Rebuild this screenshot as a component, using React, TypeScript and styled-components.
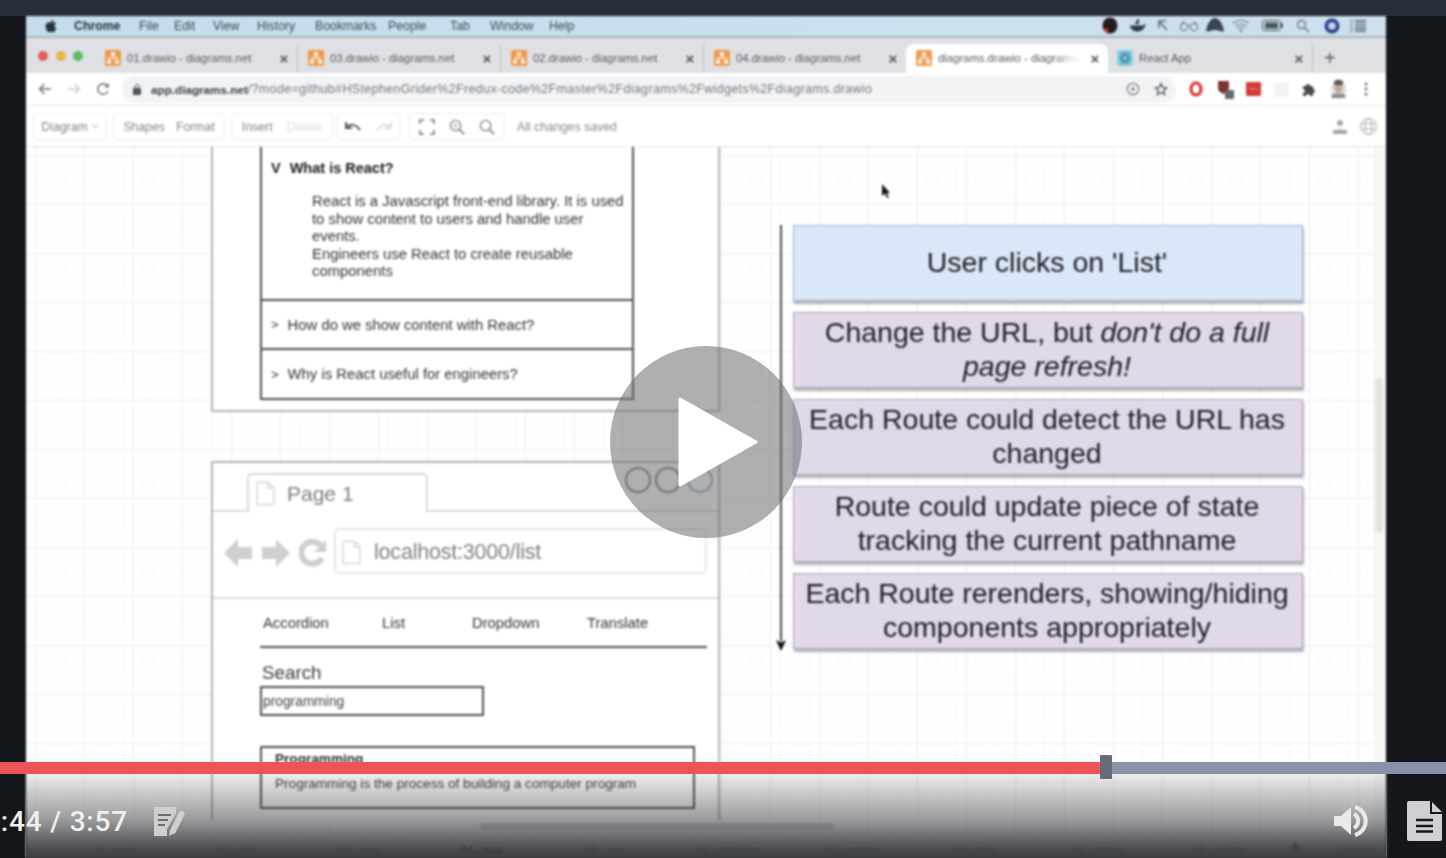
import React from "react";
import styled, { createGlobalStyle } from "styled-components";

const Global = createGlobalStyle`
  html, body { margin: 0; padding: 0; background: #14171c; overflow: hidden; }
  body { font-family: "Liberation Sans", Arial, sans-serif; }
  * { box-sizing: border-box; }
`;

const Page = styled.div`
  position: relative;
  width: 1446px;
  height: 858px;
  overflow: hidden;
  display: flex;
  flex-direction: column;
  background: #14171c;
`;
const TopStrip = styled.div`
  height: 16px;
  flex: none;
  background: #272d3a;
`;
const Stage = styled.div`
  flex: 1;
  min-height: 0;
  display: flex;
  padding: 0 60px 0 26px;
`;
const Recording = styled.div`
  width: 1360px;
  height: 842px;
  display: flex;
  flex-direction: column;
  overflow: hidden;
  background: #fff;
  filter: blur(0.85px);
`;

/* macOS menu bar */
const MenuBar = styled.div`
  height: 22px;
  flex: none;
  display: flex;
  align-items: center;
  padding: 0 17px 1px 19px;
  background: linear-gradient(90deg, #c5dcec, #cbe0ee 60%, #cbdfec);
  border-bottom: 2px solid #a9b5bd;
  font-size: 12.3px;
  color: #3e4a55;
`;
const AppleSlot = styled.span`
  width: 29px;
  flex: none;
  display: flex;
`;
const MenuItem = styled.span<{ $w: number; $bold?: boolean }>`
  width: ${(p) => p.$w}px;
  flex: none;
  font-weight: ${(p) => (p.$bold ? 700 : 400)};
  color: ${(p) => (p.$bold ? "#27323c" : "#3e4a55")};
  white-space: nowrap;
`;
const StatusIcons = styled.div`
  margin-left: auto;
  display: flex;
  align-items: center;
`;
const Slot = styled.span<{ $w: number }>`
  width: ${(p) => p.$w}px;
  flex: none;
  display: flex;
  justify-content: center;
  align-items: center;
`;

/* Tabs */
const TabStrip = styled.div`
  height: 35px;
  flex: none;
  display: flex;
  align-items: flex-end;
  background: #dfe0e4;
  padding-left: 12px;
`;
const Lights = styled.div`
  width: 62px;
  flex: none;
  align-self: flex-start;
  margin-top: 13px;
  display: flex;
  gap: 7.5px;
`;
const Light = styled.span<{ $c: string }>`
  width: 10px;
  height: 10px;
  border-radius: 50%;
  background: ${(p) => p.$c};
`;
const Tab = styled.div<{ $w: number; $pl: number; $active?: boolean; $sep?: boolean; $gap?: number }>`
  width: ${(p) => p.$w}px;
  height: 29px;
  flex: none;
  margin-right: ${(p) => p.$gap ?? 0}px;
  display: flex;
  align-items: center;
  padding: 0 3px 1px ${(p) => p.$pl}px;
  gap: 6px;
  font-size: 11.3px;
  color: #56585e;
  background: ${(p) => (p.$active ? "#fff" : "transparent")};
  border-radius: ${(p) => (p.$active ? "8px 8px 0 0" : "0")};
  border-right: ${(p) => (p.$sep ? "1px solid #bcbdc2" : "0")};
`;
const TabTitle = styled.span<{ $fade?: boolean }>`
  flex: 1;
  min-width: 0;
  white-space: nowrap;
  overflow: hidden;
  ${(p) => (p.$fade ? "mask-image: linear-gradient(90deg, #000 82%, transparent 100%);" : "")}
`;
const TabClose = styled.span`
  width: 20px;
  flex: none;
  font-size: 15px;
  color: #4e5054;
  font-weight: 700;
  text-align: center;
`;
const NewTab = styled.span`
  margin-left: 11px;
  margin-bottom: 3px;
  font-size: 20px;
  line-height: 24px;
  color: #55575c;
`;

/* Address */
const AddressBar = styled.div`
  height: 33px;
  flex: none;
  display: flex;
  align-items: center;
  padding-left: 12px;
  background: #fff;
  border-bottom: 1px solid #e3e4e6;
`;
const NavIcons = styled.div`
  width: 84px;
  flex: none;
  display: flex;
  gap: 15px;
  align-items: center;
`;
const Omnibox = styled.div`
  width: 1054px;
  height: 27px;
  flex: none;
  display: flex;
  align-items: center;
  border-radius: 13px;
  background: #f1f3f4;
  padding-left: 11px;
  font-size: 12.5px;
  letter-spacing: 0.33px;
  color: #74777c;
`;
const LockSlot = styled.span`
  width: 18px;
  flex: none;
  display: flex;
`;
const Host = styled.span`
  color: #3c4043;
  font-weight: 700;
  font-size: 11.7px;
  letter-spacing: 0;
`;
const Url = styled.span`
  flex: 1;
  white-space: nowrap;
`;
const OmniEnd = styled.div`
  display: flex;
  gap: 14px;
  align-items: center;
  padding-right: 8px;
`;
const Extensions = styled.div`
  display: flex;
  align-items: center;
  margin-left: 6px;
`;

/* drawio toolbar */
const Toolbar = styled.div`
  height: 41px;
  flex: none;
  display: flex;
  align-items: center;
  padding: 1px 9px 0 7px;
  background: #fff;
  border-bottom: 1px solid #e6e6e6;
  font-size: 12.3px;
  color: #858585;
`;
const ToolGroup = styled.div<{ $w: number; $ml?: number; $gap?: number }>`
  width: ${(p) => p.$w}px;
  margin-left: ${(p) => p.$ml ?? 0}px;
  height: 27px;
  flex: none;
  display: flex;
  align-items: center;
  justify-content: center;
  gap: ${(p) => p.$gap ?? 10}px;
  border: 1px solid #ececec;
  border-radius: 4px;
`;
const Faded = styled.span`
  color: #dfdfdf;
`;
const Saved = styled.span`
  margin-left: 12px;
  color: #8a8a8a;
`;
const ToolEnd = styled.div`
  margin-left: auto;
  display: flex;
  align-items: center;
  gap: 13px;
`;

/* Canvas */
const Canvas = styled.div`
  position: relative;
  flex: 1;
  min-height: 0;
  overflow: hidden;
  background-color: #fff;
  background-image:
    linear-gradient(#ededed 1px, transparent 1px),
    linear-gradient(90deg, #ededed 1px, transparent 1px),
    linear-gradient(#f9f9f9 1px, transparent 1px),
    linear-gradient(90deg, #f9f9f9 1px, transparent 1px);
  background-size: 49px 49px, 49px 49px, 9.8px 9.8px, 9.8px 9.8px;
  background-position: 9px 8px;
`;
const Node = styled.div<{ $x: number; $y: number; $w: number; $h: number }>`
  position: absolute;
  left: ${(p) => p.$x - 26}px;
  top: ${(p) => p.$y - 147}px;
  width: ${(p) => p.$w}px;
  height: ${(p) => p.$h}px;
`;
const BrowserFrame = styled(Node)<{ $open?: boolean }>`
  background: #fff;
  border: 2px solid #b3b3b3;
  border-bottom-width: ${(p) => (p.$open ? 0 : 2)}px;
`;
const Accordion = styled(Node)`
  display: flex;
  flex-direction: column;
  background: #fff;
  border: 2px solid #505050;
  color: #333;
  font-size: 14.85px;
`;
const AccordionOpen = styled.div`
  height: 169px;
  flex: none;
  display: flex;
  flex-direction: column;
  border-bottom: 2px solid #505050;
  padding: 28px 0 0 9px;
`;
const AccordionHead = styled.div`
  display: flex;
  gap: 9px;
  font-size: 14.5px;
  font-weight: 700;
  color: #1a1a1a;
  line-height: 16px;
`;
const AccordionBody = styled.div`
  margin: 17px 0 0 41px;
  width: 316px;
  line-height: 17.5px;
`;
const AccordionRow = styled.div<{ $last?: boolean }>`
  height: ${(p) => (p.$last ? 48 : 49)}px;
  flex: none;
  display: flex;
  align-items: center;
  gap: 9px;
  padding-left: 9px;
  border-bottom: ${(p) => (p.$last ? "0" : "2px solid #505050")};
`;
const Chevron = styled.span`
  font-size: 13px;
`;
const TabShape = styled(Node)`
  display: flex;
  align-items: center;
  gap: 12px;
  padding-left: 7px;
  background: #fff;
  border: 2px solid #d9d9d9;
  border-bottom: 0;
  border-radius: 5px 5px 0 0;
  font-size: 21px;
  color: #7d7d7d;
`;
const FrameRule = styled(Node)`
  background: #dadada;
`;
const DarkRule = styled(Node)`
  background: #505050;
`;
const UrlBox = styled(Node)`
  display: flex;
  align-items: center;
  gap: 13px;
  padding: 3px 0 0 6px;
  border: 2px solid #e6e6e6;
  border-radius: 5px;
  font-size: 21.5px;
  color: #808080;
  letter-spacing: -0.2px;
`;
const NavGlyphs = styled(Node)`
  display: flex;
  align-items: center;
  justify-content: space-between;
`;
const WireLink = styled(Node)`
  font-size: 14.8px;
  line-height: 18px;
  color: #333;
  white-space: nowrap;
`;
const SearchLabel = styled(Node)`
  font-size: 18.8px;
  line-height: 22px;
  color: #3c3c3c;
`;
const SearchInput = styled(Node)`
  display: flex;
  align-items: center;
  padding-left: 1px;
  border: 2px solid #505050;
  background: #fff;
  font-size: 13.8px;
  color: #404040;
`;
const ResultBox = styled(Node)`
  border: 2px solid #505050;
  background: #fff;
  padding: 2px 0 0 13px;
  font-size: 13.6px;
  color: #3c3c3c;
`;
const ResultTitle = styled.div`
  font-weight: 700;
  line-height: 17px;
  color: #2c2c2c;
`;
const ResultText = styled.div`
  margin-top: 9px;
  line-height: 16px;
  white-space: nowrap;
`;
const Circle = styled(Node)<{ $c: string }>`
  border: 2px solid ${(p) => p.$c};
  border-radius: 50%;
`;
const Flow = styled(Node)<{ $blue?: boolean }>`
  display: flex;
  align-items: center;
  justify-content: center;
  text-align: center;
  padding: 0 5px 2px 3px;
  font-size: 28.5px;
  line-height: 34px;
  color: #1e1e24;
  background: ${(p) => (p.$blue ? "#dae7f8" : "#e1d8e8")};
  border: 1px solid ${(p) => (p.$blue ? "#9db5d3" : "#b3a3bd")};
  box-shadow: 1px 3px 2px rgba(90, 90, 100, 0.45);
`;
const ArrowLine = styled(Node)`
  background: #4a4a4a;
`;
const PageLabel = styled(Node)<{ $strong?: boolean }>`
  font-size: 11px;
  line-height: 14px;
  white-space: nowrap;
  color: ${(p) => (p.$strong ? "#1a1a1a" : "#6f6f6f")};
  font-weight: ${(p) => (p.$strong ? 700 : 400)};
`;
const PagePlus = styled(PageLabel)`
  font-size: 18px;
  font-weight: 700;
  color: #333;
`;
const HScroll = styled(Node)`
  background: #dcdcdc;
  border-radius: 4px;
`;
const ScrollTrack = styled(Node)`
  background: #f7f7f7;
`;
const VScroll = styled(Node)`
  background: #e3e3e3;
  border-radius: 4px;
`;

/* Player overlay */
const Shade = styled.div`
  position: absolute;
  left: 26px;
  right: 60px;
  bottom: 0;
  height: 100px;
  background: linear-gradient(
    to bottom,
    rgba(60, 62, 66, 0) 0%,
    rgba(60, 62, 66, 0.05) 12%,
    rgba(60, 62, 66, 0.24) 32%,
    rgba(60, 62, 66, 0.52) 62%,
    rgba(60, 62, 66, 0.94) 92%,
    rgba(58, 60, 64, 0.98) 100%
  );
  pointer-events: none;
`;
const PlayButton = styled.div`
  position: absolute;
  left: 610px;
  top: 346px;
  width: 192px;
  height: 192px;
  padding-left: 24px;
  border-radius: 50%;
  background: rgba(110, 110, 110, 0.55);
  display: flex;
  align-items: center;
  justify-content: center;
`;
const Track = styled.div`
  position: absolute;
  left: 0;
  right: 0;
  top: 762px;
  height: 12px;
  background: #8b92a8;
  display: flex;
`;
const Played = styled.div`
  height: 100%;
  background: #eb5558;
`;
const Thumb = styled.div`
  width: 12px;
  height: 24px;
  margin-top: -7px;
  background: #666b7a;
  border-radius: 1px;
`;
const Controls = styled.div`
  position: absolute;
  left: 0;
  right: 0;
  top: 800px;
  height: 42px;
  display: flex;
  align-items: center;
`;
const Time = styled.div`
  width: 128px;
  flex: none;
  display: flex;
  justify-content: flex-end;
  overflow: hidden;
  font-family: Roboto, "Liberation Sans", sans-serif;
  font-size: 28px;
  font-weight: 500;
  letter-spacing: 0.8px;
  color: #f0f0f0;
  white-space: nowrap;
`;
const NotesSlot = styled.div`
  margin-left: 25px;
  display: flex;
`;
const RightControls = styled.div`
  margin-left: auto;
  display: flex;
  align-items: center;
  gap: 38px;
  padding-right: 4px;
`;

const Drawio = () => (
  <svg width="16" height="16" viewBox="0 0 16 16">
    <rect width="16" height="16" rx="1.5" fill="#ef9a4a" />
    <path d="M8 5v3M8 8H4v3M8 8h4v3" stroke="#fff" strokeWidth="1.2" fill="none" />
    <rect x="6" y="2.5" width="4" height="3" fill="#fff" />
    <rect x="2" y="10.5" width="4" height="3" fill="#fff" />
    <rect x="10" y="10.5" width="4" height="3" fill="#fff" />
  </svg>
);
const DocOutline = () => (
  <svg width="19" height="25" viewBox="0 0 20 26">
    <path d="M1.2 1.2H13L18.8 7V24.8H1.2Z M13 1.2V7H18.8" fill="#fff" stroke="#dcdcdc" strokeWidth="1.8" />
  </svg>
);

const tabs = ["01.drawio - diagrams.net", "03.drawio - diagrams.net", "02.drawio - diagrams.net"];
const menus: [string, number, boolean?][] = [
  ["Chrome", 65, true], ["File", 35], ["Edit", 39], ["View", 44], ["History", 58],
  ["Bookmarks", 73], ["People", 62], ["Tab", 40], ["Window", 59], ["Help", 40],
];
const pageTabs: [string, number, boolean?][] = [
  ["01 - nav", 94], ["02 - side", 215], ["03 - nav", 339], ["04 - nav", 461, true], ["05 - nav", 585],
  ["06 - mapping", 696], ["07 - comps", 824], ["08 - style", 951], ["09 - routes", 1071], ["09 - routes", 1193], ["140% ^", 1338],
];
const progress = 1100;

export default function App() {
  return (
    <Page>
      <Global />
      <TopStrip />
      <Stage>
        <Recording>
          <MenuBar>
            <AppleSlot>
              <svg width="12" height="14" viewBox="0 0 12 14">
                <path d="M8.2 0.5c.1 1.4-1 2.600-2.300 2.600C5.800 1.800 7 .6 8.200.5zM6 3.600c.7 0 1.400-.5 2.400-.5 1 0 1.900.5 2.500 1.300-2 1.200-1.700 4 .4 4.800-.6 1.600-1.800 4-3.100 4-.8 0-1.200-.5-2.100-.5-.9 0-1.300.5-2.100.5C2.300 13.200.6 10.100.6 7.500c0-2.600 1.700-4.300 3.300-4.300.8 0 1.500.4 2.100.4z" fill="#27323c" />
              </svg>
            </AppleSlot>
            {menus.map(([m, w, b]) => <MenuItem key={m} $w={w} $bold={b}>{m}</MenuItem>)}
            <StatusIcons>
              <Slot $w={26}><svg width="16" height="17" viewBox="0 0 16 17"><ellipse cx="8" cy="8.500" rx="7.500" ry="8" fill="#201c1c" /><path d="M1 12a7.500 8 0 0 0 5 4.500V11z" fill="#d8382f" /></svg></Slot>
              <Slot $w={28}><svg width="17" height="13" viewBox="0 0 17 13"><path d="M1 6.500h13c.5-1 1.500-1.500 2.500-1.500-.5 4-3.500 7.500-8 7.500C4 12.500 1.500 10 1 6.500zM6 5V3h2V0h2v5z" fill="#323a40" /></svg></Slot>
              <Slot $w={24}><svg width="11" height="12" viewBox="0 0 11 12"><path d="M1 8V1h7M1 1l8 9" fill="none" stroke="#5d6a74" strokeWidth="1.600" /></svg></Slot>
              <Slot $w={28}><svg width="20" height="11" viewBox="0 0 20 11"><circle cx="5" cy="7" r="3.700" fill="none" stroke="#5d6a74" /><circle cx="15" cy="7" r="3.700" fill="none" stroke="#5d6a74" /><path d="M8.500 6c1-1 2-1 3 0M2 5l3-4M18 5l-3-4" stroke="#5d6a74" fill="none" /></svg></Slot>
              <Slot $w={24}><svg width="18" height="15" viewBox="0 0 18 15"><path d="M9 0c4 0 8 6 9 13-2 1.500-5-1-9-1s-7 2.500-9 1C1 6 5 0 9 0z" fill="#3a454d" /></svg></Slot>
              <Slot $w={28}><svg width="18" height="14" viewBox="0 0 18 14"><path d="M1 4.500c4.500-4 11.500-4 16 0M3.500 7.500c3-2.800 8-2.800 11 0M6 10c1.700-1.500 4.300-1.500 6 0" stroke="#7d8a93" strokeWidth="1.200" fill="none" /><circle cx="9" cy="12.300" r="1.300" fill="#7d8a93" /></svg></Slot>
              <Slot $w={34}><svg width="21" height="13" viewBox="0 0 21 13"><rect x=".5" y="1.500" width="18" height="10" rx="2" fill="none" stroke="#4a555d" /><rect x="3" y="3.500" width="13" height="6" fill="#4a555d" /><rect x="19" y="4.500" width="2" height="4" fill="#4a555d" /></svg></Slot>
              <Slot $w={28}><svg width="14" height="14" viewBox="0 0 14 14"><circle cx="5.500" cy="5.500" r="4" fill="none" stroke="#6b7780" strokeWidth="1.300" /><path d="M8.500 8.500 13 13" stroke="#6b7780" strokeWidth="1.500" /></svg></Slot>
              <Slot $w={30}><svg width="16" height="16" viewBox="0 0 16 16"><circle cx="8" cy="8" r="7.500" fill="#2f3f8f" /><circle cx="8" cy="8" r="3.800" fill="#c7d2ea" /></svg></Slot>
              <Slot $w={22}><svg width="16" height="12" viewBox="0 0 16 12"><path d="M0 1h3M0 4.500h3M0 8h3M0 11h3" stroke="#7d8a93" strokeWidth="1.500" /><path d="M5 1h11M5 4.500h11M5 8h11M5 11h11" stroke="#6b7780" strokeWidth="2" /></svg></Slot>
            </StatusIcons>
          </MenuBar>
          <TabStrip>
            <Lights>
              <Light $c="#e25c5f" /><Light $c="#e8b548" /><Light $c="#5fbe62" />
            </Lights>
            {tabs.map((t) => (
              <Tab key={t} $w={198} $pl={5} $gap={5} $sep>
                <Drawio />
                <TabTitle>{t}</TabTitle>
                <TabClose>×</TabClose>
              </Tab>
            ))}
            <Tab $w={197} $pl={5}>
              <Drawio />
              <TabTitle>04.drawio - diagrams.net</TabTitle>
              <TabClose>×</TabClose>
            </Tab>
            <Tab $w={202} $pl={10} $active>
              <Drawio />
              <TabTitle $fade>diagrams.drawio - diagrams.</TabTitle>
              <TabClose>×</TabClose>
            </Tab>
            <Tab $w={205} $pl={9} $sep>
              <svg width="16" height="16" viewBox="0 0 16 16"><rect width="16" height="16" rx="2" fill="#8cd2e4" /><g fill="none" stroke="#3b7f96"><ellipse cx="8" cy="8" rx="6" ry="2.400" /><ellipse cx="8" cy="8" rx="6" ry="2.400" transform="rotate(60 8 8)" /><ellipse cx="8" cy="8" rx="6" ry="2.400" transform="rotate(120 8 8)" /></g></svg>
              <TabTitle>React App</TabTitle>
              <TabClose>×</TabClose>
            </Tab>
            <NewTab>+</NewTab>
          </TabStrip>
          <AddressBar>
            <NavIcons>
              <svg width="14" height="12" viewBox="0 0 14 12"><path d="M13 6H2M6.500 1 1.500 6l5 5" fill="none" stroke="#6d6f73" strokeWidth="1.400" /></svg>
              <svg width="14" height="12" viewBox="0 0 14 12"><path d="M1 6h11M7.500 1l5 5-5 5" fill="none" stroke="#c9cacc" strokeWidth="1.400" /></svg>
              <svg width="14" height="14" viewBox="0 0 14 14"><path d="M11.800 4.500A5.300 5.300 0 1 0 12 9" fill="none" stroke="#6d6f73" strokeWidth="1.500" /><path d="M12.800 1v4.500H8.300z" fill="#6d6f73" /></svg>
            </NavIcons>
            <Omnibox>
              <LockSlot>
                <svg width="8" height="11" viewBox="0 0 8 11"><rect y="4" width="8" height="7" rx="1" fill="#4f5256" /><path d="M2 4V2.500a2 2 0 0 1 4 0V4" fill="none" stroke="#4f5256" /></svg>
              </LockSlot>
              <Host>app.diagrams.net</Host>
              <Url>/?mode=github#HStephenGrider%2Fredux-code%2Fmaster%2Fdiagrams%2Fwidgets%2Fdiagrams.drawio</Url>
              <OmniEnd>
                <svg width="14" height="14" viewBox="0 0 14 14"><circle cx="7" cy="7" r="5.700" fill="none" stroke="#7c7f83" strokeWidth="1.200" /><circle cx="7" cy="7" r="1.800" fill="#7c7f83" /></svg>
                <svg width="14" height="14" viewBox="0 0 14 14"><path d="M7 1.500 8.700 5.300l4 .4-3 2.700.9 4L7 10.400l-3.600 2 .9-4-3-2.700 4-.4z" fill="none" stroke="#55585c" strokeWidth="1.300" /></svg>
              </OmniEnd>
            </Omnibox>
            <Extensions>
              <Slot $w={28}><svg width="14" height="16" viewBox="0 0 14 16"><ellipse cx="7" cy="8" rx="5" ry="6" fill="none" stroke="#d8322a" strokeWidth="3.200" /></svg></Slot>
              <Slot $w={32}><svg width="19" height="20" viewBox="0 0 19 20"><path d="M1 2h11v7c0 3-3 5-5.500 6C4 14 1 12 1 9z" fill="#7d3230" /><rect x="8" y="11" width="9" height="9" rx="1" fill="#66696d" /></svg></Slot>
              <Slot $w={22}><svg width="15" height="14" viewBox="0 0 15 14"><rect width="15" height="14" rx="1" fill="#d33b35" /><path d="M4 7h1.500M7 7h1.500M10 7h1.500" stroke="#fff" /></svg></Slot>
              <Slot $w={34}><svg width="15" height="15" viewBox="0 0 15 15"><rect width="15" height="15" fill="#f2f3f4" /></svg></Slot>
              <Slot $w={22}><svg width="15" height="15" viewBox="0 0 15 15"><path d="M1 4h3a2 2 0 0 1 4 0h3v3a2 2 0 0 1 0 4v3H8a2 2 0 0 0-4 0H1v-3a2 2 0 0 0 0-4z" fill="#45484c" /></svg></Slot>
              <Slot $w={36}><svg width="17" height="21" viewBox="0 0 17 21"><ellipse cx="8.500" cy="10" rx="7.500" ry="10" fill="#dcdcd9" /><ellipse cx="8.500" cy="8" rx="4" ry="6" fill="#c2a898" /><path d="M4 3c2-3 7-3 9 0l-.5 3H4.500z" fill="#5e5550" /><path d="M1.500 16c3-2 11-2 14 0v3H1.500z" fill="#8a8e92" /></svg></Slot>
              <Slot $w={20}><svg width="4" height="14" viewBox="0 0 4 14"><circle cx="2" cy="2" r="1.500" fill="#6d6f73" /><circle cx="2" cy="7" r="1.500" fill="#6d6f73" /><circle cx="2" cy="12" r="1.500" fill="#6d6f73" /></svg></Slot>
            </Extensions>
          </AddressBar>
          <Toolbar>
            <ToolGroup $w={74} $gap={4}>Diagram<svg width="7" height="5" viewBox="0 0 7 5"><path d="M.5.500 3.500 4l3-3.500" fill="none" stroke="#aaa" /></svg></ToolGroup>
            <ToolGroup $w={112} $ml={6} $gap={11}>Shapes<span>Format</span></ToolGroup>
            <ToolGroup $w={102} $ml={6} $gap={14}>Insert<Faded>Delete</Faded></ToolGroup>
            <ToolGroup $w={63} $ml={4} $gap={13}>
              <svg width="18" height="12" viewBox="0 0 18 12"><path d="M2 1v6h6M2 7c3-4 9-5 14 2" fill="none" stroke="#555" strokeWidth="2" /></svg>
              <svg width="18" height="12" viewBox="0 0 18 12"><path d="M16 1v6h-6M16 7c-3-4-9-5-14 2" fill="none" stroke="#ddd" strokeWidth="2" /></svg>
            </ToolGroup>
            <ToolGroup $w={96} $ml={9} $gap={14}>
              <svg width="16" height="16" viewBox="0 0 16 16"><path d="M1 5V1h4M11 1h4v4M1 11v4h4M15 11v4h-4" fill="none" stroke="#777" strokeWidth="1.600" /></svg>
              <svg width="16" height="16" viewBox="0 0 17 17"><circle cx="7" cy="7" r="5.500" fill="none" stroke="#888" strokeWidth="1.500" /><path d="M11 11l5 5" stroke="#888" strokeWidth="2" /><path d="M7 4v6M4 7h6" stroke="#aaa" /></svg>
              <svg width="16" height="16" viewBox="0 0 17 17"><circle cx="7" cy="7" r="5.500" fill="none" stroke="#888" strokeWidth="1.500" /><path d="M11 11l5 5" stroke="#888" strokeWidth="2" /></svg>
            </ToolGroup>
            <Saved>All changes saved</Saved>
            <ToolEnd>
              <svg width="14" height="15" viewBox="0 0 14 15"><circle cx="7" cy="4" r="3" fill="#a5a5a5" /><path d="M0 15v-3c2-2 12-2 14 0v3z" fill="#a5a5a5" /></svg>
              <svg width="17" height="17" viewBox="0 0 17 17"><g fill="none" stroke="#ababab"><circle cx="8.500" cy="8.500" r="8" /><ellipse cx="8.500" cy="8.500" rx="3.500" ry="8" /><path d="M1 6h15M1 11h15" /></g></svg>
            </ToolEnd>
          </Toolbar>
          <Canvas>
            <BrowserFrame $x={211} $y={130} $w={509} $h={282} />
            <Accordion $x={260} $y={130} $w={374} $h={270}>
              <AccordionOpen>
                <AccordionHead><span>V</span><span>What is React?</span></AccordionHead>
                <AccordionBody>
                  React is a Javascript front-end library. It is used to show content to users and handle user events.<br />
                  Engineers use React to create reusable components
                </AccordionBody>
              </AccordionOpen>
              <AccordionRow><Chevron>&gt;</Chevron>How do we show content with React?</AccordionRow>
              <AccordionRow $last><Chevron>&gt;</Chevron>Why is React useful for engineers?</AccordionRow>
            </Accordion>

            <BrowserFrame $x={211} $y={461} $w={509} $h={359} $open />
            <FrameRule $x={213} $y={510} $w={505} $h={2} />
            <TabShape $x={247} $y={473} $w={181} $h={39}>
              <DocOutline />Page 1
            </TabShape>
            <Circle $x={625} $y={467} $w={26} $h={26} $c="#7a7a7a" />
            <Circle $x={655} $y={467} $w={26} $h={26} $c="#7a7a7a" />
            <Circle $x={687} $y={467} $w={26} $h={26} $c="#8ba7cc" />
            <NavGlyphs $x={224} $y={537} $w={103} $h={32}>
              <svg width="28" height="30" viewBox="0 0 28 30"><path d="M0 15 14 1v8h14v12H14v8z" fill="#cfcfcf" /></svg>
              <svg width="28" height="30" viewBox="0 0 28 30"><path d="M28 15 14 1v8H0v12h14v8z" fill="#cfcfcf" /></svg>
              <svg width="28" height="30" viewBox="0 0 28 30"><path d="M23 20a11 11 0 1 1-1-12" fill="none" stroke="#cfcfcf" strokeWidth="6" /><path d="M27 2v12H15z" fill="#cfcfcf" /></svg>
            </NavGlyphs>
            <UrlBox $x={334} $y={528} $w={373} $h={46}>
              <DocOutline />localhost:3000/list
            </UrlBox>
            <FrameRule $x={213} $y={597} $w={505} $h={2} />
            <WireLink $x={263} $y={614} $w={70} $h={18}>Accordion</WireLink>
            <WireLink $x={382} $y={614} $w={30} $h={18}>List</WireLink>
            <WireLink $x={472} $y={614} $w={70} $h={18}>Dropdown</WireLink>
            <WireLink $x={587} $y={614} $w={70} $h={18}>Translate</WireLink>
            <DarkRule $x={260} $y={646} $w={447} $h={2} />
            <SearchLabel $x={262} $y={662} $w={80} $h={22}>Search</SearchLabel>
            <SearchInput $x={260} $y={686} $w={224} $h={30}>programming</SearchInput>
            <ResultBox $x={260} $y={746} $w={435} $h={63}>
              <ResultTitle>Programming</ResultTitle>
              <ResultText>Programming is the process of building a computer program</ResultText>
            </ResultBox>

            <ArrowLine $x={780} $y={225} $w={2} $h={416} />
            <Node $x={776} $y={637} $w={10} $h={11}>
              <svg width="10" height="11" viewBox="0 0 10 11"><path d="M0 0 5 11 10 0 5 2.500z" fill="#111" /></svg>
            </Node>
            <Flow $x={793} $y={225} $w={510} $h={76} $blue>User clicks on 'List'</Flow>
            <Flow $x={793} $y={312} $w={510} $h={76}><span>Change the URL, but <i>don't do a full page refresh!</i></span></Flow>
            <Flow $x={793} $y={399} $w={510} $h={76}>Each Route could detect the URL has changed</Flow>
            <Flow $x={793} $y={486} $w={510} $h={76}>Route could update piece of state tracking the current pathname</Flow>
            <Flow $x={793} $y={573} $w={510} $h={76}>Each Route rerenders, showing/hiding components appropriately</Flow>
            <Node $x={881} $y={184} $w={10} $h={16}>
              <svg width="10" height="16" viewBox="0 0 10 16"><path d="M1 0v12l3-2.500 2 4.500 1.800-.8-2-4.300H9z" fill="#111" /></svg>
            </Node>
            <ScrollTrack $x={1373} $y={147} $w={13} $h={711} />
            <VScroll $x={1375} $y={378} $w={8} $h={155} />
            <HScroll $x={480} $y={823} $w={355} $h={7} />
            {pageTabs.map(([t, x, s], i) => (
              <PageLabel key={i} $x={x} $y={843} $w={70} $h={14} $strong={s}>{t}</PageLabel>
            ))}
            <PagePlus $x={1290} $y={840} $w={12} $h={16}>+</PagePlus>
          </Canvas>
        </Recording>
      </Stage>
      <Shade />
      <PlayButton>
        <svg width="80" height="94" viewBox="0 0 80 94">
          <path d="M2 4 78 47 2 90z" fill="#fff" stroke="#fff" strokeWidth="3" strokeLinejoin="round" />
        </svg>
      </PlayButton>
      <Track>
        <Played style={{ width: progress }} />
        <Thumb />
      </Track>
      <Controls>
        <Time>2:44 / 3:57</Time>
        <NotesSlot>
          <svg width="33" height="32" viewBox="0 0 33 32">
            <path d="M1 2h22v6L14 24v7H1z" fill="#cfcfcf" />
            <path d="M5 10h13M5 15h10M5 20h7" stroke="#6a6c70" strokeWidth="2" />
            <path d="M28.500 9 20 26" stroke="#cfcfcf" strokeWidth="6" strokeLinecap="round" />
            <path d="M17 25l-1 6 5-3z" fill="#cfcfcf" />
          </svg>
        </NotesSlot>
        <RightControls>
          <svg width="36" height="32" viewBox="0 0 36 32">
            <path d="M1 11h7l10-9v28l-10-9H1z" fill="#e9e9e9" />
            <path d="M21 9a8 8 0 0 1 0 14M22 2a14.500 14.500 0 0 1 0 28" fill="none" stroke="#e9e9e9" strokeWidth="4" />
          </svg>
          <svg width="35" height="40" viewBox="0 0 35 40">
            <path d="M2 0h21v13h12v25a2 2 0 0 1-2 2H2a2 2 0 0 1-2-2V2a2 2 0 0 1 2-2zM25 1l10 10H25z" fill="#d0d0d4" />
            <path d="M9 19h17M9 25h17M9 30.500h17" stroke="#14171c" strokeWidth="2.600" />
          </svg>
        </RightControls>
      </Controls>
    </Page>
  );
}
